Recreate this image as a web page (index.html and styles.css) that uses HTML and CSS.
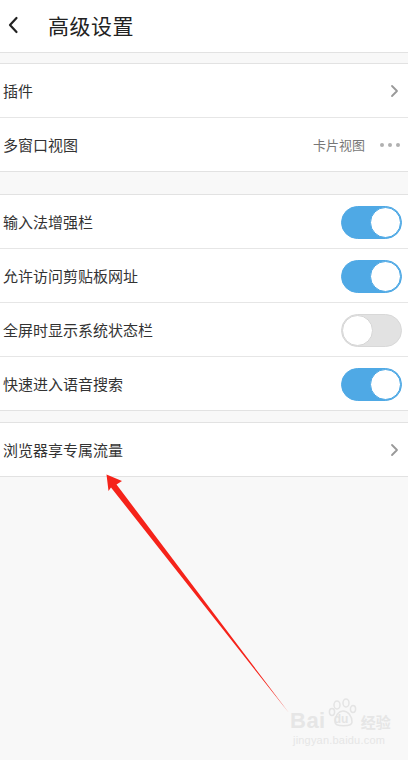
FILE: index.html
```html
<!DOCTYPE html>
<html lang="zh-CN">
<head>
<meta charset="utf-8">
<title>高级设置</title>
<link rel="stylesheet" href="styles.css">
</head>
<body>
<div class="page">
  <header class="header">
    <svg class="back" width="12" height="18" viewBox="0 0 12 18"><path d="M9.5 2 L3 9 L9.5 16" fill="none" stroke="#222" stroke-width="2.2" stroke-linecap="round" stroke-linejoin="round"/></svg>
    <h1 class="title">高级设置</h1>
  </header>

  <section class="group g1">
    <div class="row"><span class="label">插件</span><svg class="chev" width="9" height="14" viewBox="0 0 9 14"><path d="M2 2 L7 7 L2 12" fill="none" stroke="#999" stroke-width="1.8" stroke-linecap="round" stroke-linejoin="round"/></svg></div>
    <div class="row"><span class="label">多窗口视图</span><span class="value">卡片视图</span><span class="dots"><i></i><i></i><i></i></span></div>
  </section>

  <section class="group g2">
    <div class="row"><span class="label">输入法增强栏</span><span class="switch on"><b></b></span></div>
    <div class="row"><span class="label">允许访问剪贴板网址</span><span class="switch on"><b></b></span></div>
    <div class="row"><span class="label">全屏时显示系统状态栏</span><span class="switch"><b></b></span></div>
    <div class="row"><span class="label">快速进入语音搜索</span><span class="switch on"><b></b></span></div>
  </section>

  <section class="group g3">
    <div class="row"><span class="label">浏览器享专属流量</span><svg class="chev" width="9" height="14" viewBox="0 0 9 14"><path d="M2 2 L7 7 L2 12" fill="none" stroke="#999" stroke-width="1.8" stroke-linecap="round" stroke-linejoin="round"/></svg></div>
  </section>

  <svg class="arrow" width="408" height="760" viewBox="0 0 408 760">
    <path d="M106.5 474.5 L122 481 L116.5 484.5 L289 713 L111 487.5 L108.5 491 Z" fill="#f5231a"/>
  </svg>

  <div class="watermark">
    <div class="wm-top">
      <span class="wm-bai">Bai</span>
      <span class="wm-paw">
        <svg width="30" height="30" viewBox="0 0 30 30">
          <ellipse cx="9" cy="7" rx="3" ry="4" fill="none" stroke="#e4e4e4" stroke-width="1.5"/>
          <ellipse cx="18" cy="5" rx="3" ry="4" fill="none" stroke="#e4e4e4" stroke-width="1.5"/>
          <ellipse cx="25" cy="11" rx="2.6" ry="3.4" fill="none" stroke="#e4e4e4" stroke-width="1.5"/>
          <ellipse cx="4" cy="14" rx="2.6" ry="3.4" fill="none" stroke="#e4e4e4" stroke-width="1.5"/>
          <path d="M7 24 C7 17 11 13 15 13 C20 13 24 18 24 24 C24 29 7 29 7 24 Z" fill="none" stroke="#e4e4e4" stroke-width="1.5"/>
        </svg>
        <span class="wm-du">du</span>
      </span>
      <span class="wm-jy">经验</span>
    </div>
    <div class="wm-url">jingyan.baidu.com</div>
  </div>
</div>
</body>
</html>
```

FILE: styles.css
```css
* { box-sizing: border-box; }
html, body { margin: 0; padding: 0; }
body {
  background: #f8f8f8;
  font-family: "Noto Sans CJK SC", "Noto Sans", sans-serif;
  color: #333;
}
.page {
  position: relative;
  width: 408px;
  height: 760px;
  overflow: hidden;
}
.header {
  height: 53px;
  background: #fff;
  border-bottom: 1px solid #e2e2e2;
  display: flex;
  align-items: center;
  padding-left: 7px;
}
.back { margin-right: 29px; margin-top: -2px; }
.title {
  margin: 0;
  font-size: 21px;
  font-weight: 400;
  color: #222;
  letter-spacing: 0.5px;
  margin-top: -3px;
}
.group {
  background: #fff;
  border-top: 1px solid #e2e2e2;
  border-bottom: 1px solid #e2e2e2;
}
.g1 { margin-top: 10px; }
.g2 { margin-top: 22px; }
.g3 { margin-top: 11px; }
.row {
  height: 54px;
  display: flex;
  align-items: center;
  padding: 0 6px 0 3px;
  border-bottom: 1px solid #e6e6e6;
}
.row:last-child { height: 53px; border-bottom: none; }
.label {
  flex: 1;
  font-size: 15px;
  color: #333;
}
.chev { margin-right: 3px; }
.value {
  font-size: 13px;
  color: #777;
  margin-right: 15px;
}
.dots { display: flex; gap: 4px; margin-right: 2px; }
.dots i {
  display: block;
  width: 4px;
  height: 4px;
  border-radius: 50%;
  background: #b0b0b0;
}
.switch {
  position: relative;
  width: 61px;
  height: 33px;
  border-radius: 17px;
  background: #e2e2e2;
  border: 1px solid #d8d8d8;
  margin-top: 1px;
}
.switch b {
  position: absolute;
  top: 0;
  left: 0;
  width: 31px;
  height: 31px;
  border-radius: 50%;
  background: #fff;
  border: 1px solid #d6d6d6;
}
.switch.on {
  background: #4fa9e5;
  border-color: #4fa9e5;
}
.switch.on b {
  left: auto;
  right: 0;
  border-color: #4fa9e5;
}
.arrow {
  position: absolute;
  left: 0;
  top: 0;
  pointer-events: none;
}
.watermark {
  position: absolute;
  left: 290px;
  top: 704px;
  width: 118px;
  white-space: nowrap;
  color: #e6e6e6;
  font-family: "Liberation Sans", Arial, sans-serif;
}
.wm-top { display: flex; align-items: flex-end; height: 28px; }
.wm-bai { font-size: 22px; font-weight: 700; line-height: 22px; letter-spacing: 0.5px; }
.wm-paw { position: relative; flex: none; width: 30px; height: 30px; margin-left: 2px; margin-top: -6px; }
.wm-paw svg { position: absolute; left: 0; top: -4px; }
.wm-du { position: absolute; left: 6px; top: 10px; font-size: 12px; font-weight: 700; color: #e4e4e4; }
.wm-jy { flex: none; font-family: "Noto Sans CJK SC", sans-serif; font-size: 15px; font-weight: 700; line-height: 20px; margin-left: 3px; }
.wm-url { font-size: 11px; margin-top: 2px; margin-left: 3px; letter-spacing: 0.2px; }
```
